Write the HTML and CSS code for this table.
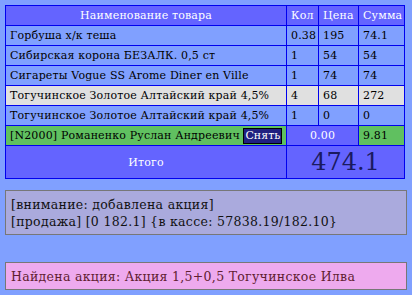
FILE: index.html
```html
<!DOCTYPE html>
<html lang="ru">
<head>
    <meta charset="UTF-8">
    <meta name="viewport" content="width=device-width, initial-scale=1.0">
    <title>Касса</title>
    <link rel="stylesheet" href="styles.css">
</head>
<body>
    <table class="check">
        <colgroup>
            <col class="col-name">
            <col class="col-qty">
            <col class="col-price">
            <col class="col-sum">
        </colgroup>
        <tr class="head">
            <th class="name">Наименование товара</th>
            <th>Кол</th>
            <th>Цена</th>
            <th>Сумма</th>
        </tr>
        <tr>
            <td>Горбуша х/к теша</td>
            <td>0.38</td>
            <td>195</td>
            <td>74.1</td>
        </tr>
        <tr>
            <td>Сибирская корона БЕЗАЛК. 0,5 ст</td>
            <td>1</td>
            <td>54</td>
            <td>54</td>
        </tr>
        <tr>
            <td>Сигареты Vogue SS Arome Diner en Ville</td>
            <td>1</td>
            <td>74</td>
            <td>74</td>
        </tr>
        <tr class="selected">
            <td>Тогучинское Золотое Алтайский край 4,5%</td>
            <td>4</td>
            <td>68</td>
            <td>272</td>
        </tr>
        <tr>
            <td>Тогучинское Золотое Алтайский край 4,5%</td>
            <td>1</td>
            <td>0</td>
            <td>0</td>
        </tr>
        <tr class="card">
            <td>[N2000] Романенко Руслан Андреевич <button class="remove">Снять</button></td>
            <td colspan="2" class="discount">0.00</td>
            <td>9.81</td>
        </tr>
        <tr class="total">
            <td class="total-label">Итого</td>
            <td colspan="3" class="total-value">474.1</td>
        </tr>
    </table>

    <div class="message info">
        [внимание: добавлена акция]<br>
        [продажа] [0 182.1] {в кассе: 57838.19/182.10}
    </div>

    <div class="message promo">Найдена акция: Акция 1,5+0,5 Тогучинское Илва</div>
</body>
</html>
```

FILE: styles.css
```css
body {
    margin: 5px;
    background-color: #80a0ff;
    font-family: "DejaVu Serif", serif;
    font-size: 11px;
    color: #000;
}
.check {
    width: 399px;
    table-layout: fixed;
    border-collapse: collapse;
    border: 1px solid #0000ee;
    letter-spacing: 0.15px;
}
.col-name { width: 281px; }
.col-qty { width: 32px; }
.col-price { width: 40px; }
.col-sum { width: 46px; }
.check th, .check td {
    border: 1px solid #0000ee;
    height: 19px;
    padding: 0 4px;
    text-align: left;
    white-space: nowrap;
    overflow: hidden;
    font-weight: normal;
}
.head th {
    background-color: #6464ff;
    color: #fff;
}
.head th.name {
    text-align: center;
}
.selected td {
    background-color: #e0e0e0;
}
.card td {
    background-color: #60c060;
}
.card td.discount {
    background-color: #6464ff;
    color: #fff;
    text-align: center;
}
.remove {
    font: inherit;
    letter-spacing: 0;
    background-color: #202080;
    color: #fff;
    border: 1px solid #000;
    padding: 0 1px;
    line-height: 14px;
}
.total td {
    background-color: #6464ff;
    height: 32px;
}
.total .total-label {
    color: #fff;
    text-align: center;
}
.total .total-value {
    text-align: center;
    color: #1a1a60;
    font-size: 24px;
    letter-spacing: 0;
}
.message {
    border: 1px solid #777;
    padding: 5px 5px 4px;
    line-height: 17px;
    font-size: 12.5px;
    letter-spacing: 0.3px;
}
.info {
    margin-top: 11px;
    background-color: #aaaadd;
    color: #111;
}
.promo {
    margin-top: 27px;
    background-color: #eeaaee;
    color: #602030;
}
```
